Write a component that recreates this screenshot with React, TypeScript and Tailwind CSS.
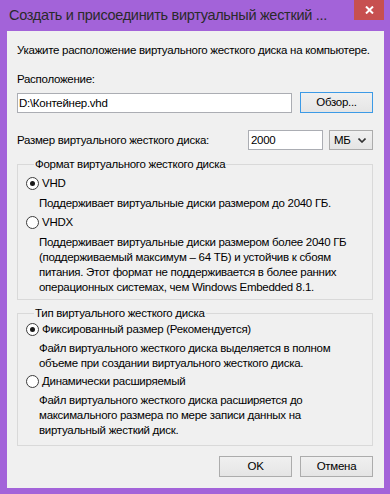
const FONT = "font-['Liberation_Sans',Arial,sans-serif]";

function Radio({ checked, label }: { checked?: boolean; label: string }) {
  return (
    <div className="flex items-center h-[17px]">
      <span className="w-[13px] h-[13px] rounded-full border border-[#3c3c3c] bg-white flex items-center justify-center shrink-0">
        {checked && <span className="w-[5px] h-[5px] rounded-full bg-[#1a1a1a]" />}
      </span>
      <span className="ml-[3px] whitespace-nowrap">{label}</span>
    </div>
  );
}

function Btn({ children, blue }: { children: string; blue?: boolean }) {
  return (
    <div
      className={`w-[73px] h-[21px] flex items-center justify-center border bg-linear-to-b from-[#f0f0f0] to-[#e5e5e5] ${
        blue ? 'border-[#3c9ae6]' : 'border-[#acacac]'
      }`}
    >
      {children}
    </div>
  );
}

export default function App() {
  return (
    <div className={`w-[390px] h-[494px] bg-[#a363d9] flex flex-col text-black ${FONT}`}>
      <div className="h-[31px] flex items-start shrink-0">
        <span className="pl-[9px] pt-[6px] text-[14.5px] tracking-[-0.3px] leading-[18px] text-[#2a2a2a] whitespace-nowrap">
          Создать и присоединить виртуальный жесткий ...
        </span>
        <div className="ml-auto mr-[6px] w-[30px] h-[20px] bg-[#c75050] flex items-center justify-center shrink-0">
          <svg width="9" height="8" viewBox="0 0 9 8">
            <path d="M1 0.5 L8 7.5 M8 0.5 L1 7.5" stroke="white" strokeWidth="2" />
          </svg>
        </div>
      </div>

      <div className="ml-[7px] mr-[6px] h-[457px] bg-[#f0f0f0] pl-[10px] pr-[11px] pt-[12px] flex flex-col text-[11.5px] tracking-[-0.28px] leading-[15px]">
        <p className="whitespace-nowrap">Укажите расположение виртуального жесткого диска на компьютере.</p>

        <p className="mt-[14px]">Расположение:</p>
        <div className="mt-[5px] flex items-start">
          <div className="mt-[1px] w-[275px] h-[20px] border border-[#abadb3] bg-white pl-[1px] flex items-center">
            D:\Контейнер.vhd
          </div>
          <div className="ml-[8px]">
            <Btn blue>Обзор...</Btn>
          </div>
        </div>

        <div className="mt-[17px] h-[20px] flex items-center">
          <span className="flex-1">Размер виртуального жесткого диска:</span>
          <div className="w-[75px] h-[20px] border border-[#abadb3] bg-white pl-[2px] flex items-center">2000</div>
          <div className="ml-[6px] w-[44px] h-[20px] border border-[#acacac] bg-linear-to-b from-[#f0f0f0] to-[#e5e5e5] flex items-center pl-[4px] pr-[6px]">
            <span className="flex-1">МБ</span>
            <svg width="8" height="5" viewBox="0 0 8 5">
              <path d="M0.5 0.5 L4 4 L7.5 0.5" stroke="#333" strokeWidth="1.6" fill="none" />
            </svg>
          </div>
        </div>

        <fieldset className="mt-[7px] border border-[#d9d9d9] pl-[8px] pb-[4px]">
          <legend className="ml-[8px] px-[1px]">Формат виртуального жесткого диска</legend>
          <div className="mt-[3px]">
            <Radio checked label="VHD" />
          </div>
          <p className="mt-[4px] pl-[13px] whitespace-nowrap">Поддерживает виртуальные диски размером до 2040 ГБ.</p>
          <div className="mt-[3px]">
            <Radio label="VHDX" />
          </div>
          <p className="mt-[4px] pl-[13px] whitespace-nowrap">
            Поддерживает виртуальные диски размером более 2040 ГБ
            <br />
            (поддерживаемый максимум – 64 ТБ) и устойчив к сбоям
            <br />
            питания. Этот формат не поддерживается в более ранних
            <br />
            операционных системах, чем Windows Embedded 8.1.
          </p>
        </fieldset>

        <fieldset className="mt-[6px] border border-[#d9d9d9] pl-[8px] pb-[7px]">
          <legend className="ml-[8px] px-[1px]">Тип виртуального жесткого диска</legend>
          <Radio checked label="Фиксированный размер (Рекомендуется)" />
          <p className="mt-[3px] pl-[13px] whitespace-nowrap">
            Файл виртуального жесткого диска выделяется в полном
            <br />
            объеме при создании виртуального жесткого диска.
          </p>
          <div className="mt-[2px]">
            <Radio label="Динамически расширяемый" />
          </div>
          <p className="mt-[3px] pl-[13px] whitespace-nowrap">
            Файл виртуального жесткого диска расширяется до
            <br />
            максимального размера по мере записи данных на
            <br />
            виртуальный жесткий диск.
          </p>
        </fieldset>

        <div className="mt-[10px] flex justify-end gap-[8px]">
          <Btn>OK</Btn>
          <Btn>Отмена</Btn>
        </div>
      </div>
    </div>
  );
}
